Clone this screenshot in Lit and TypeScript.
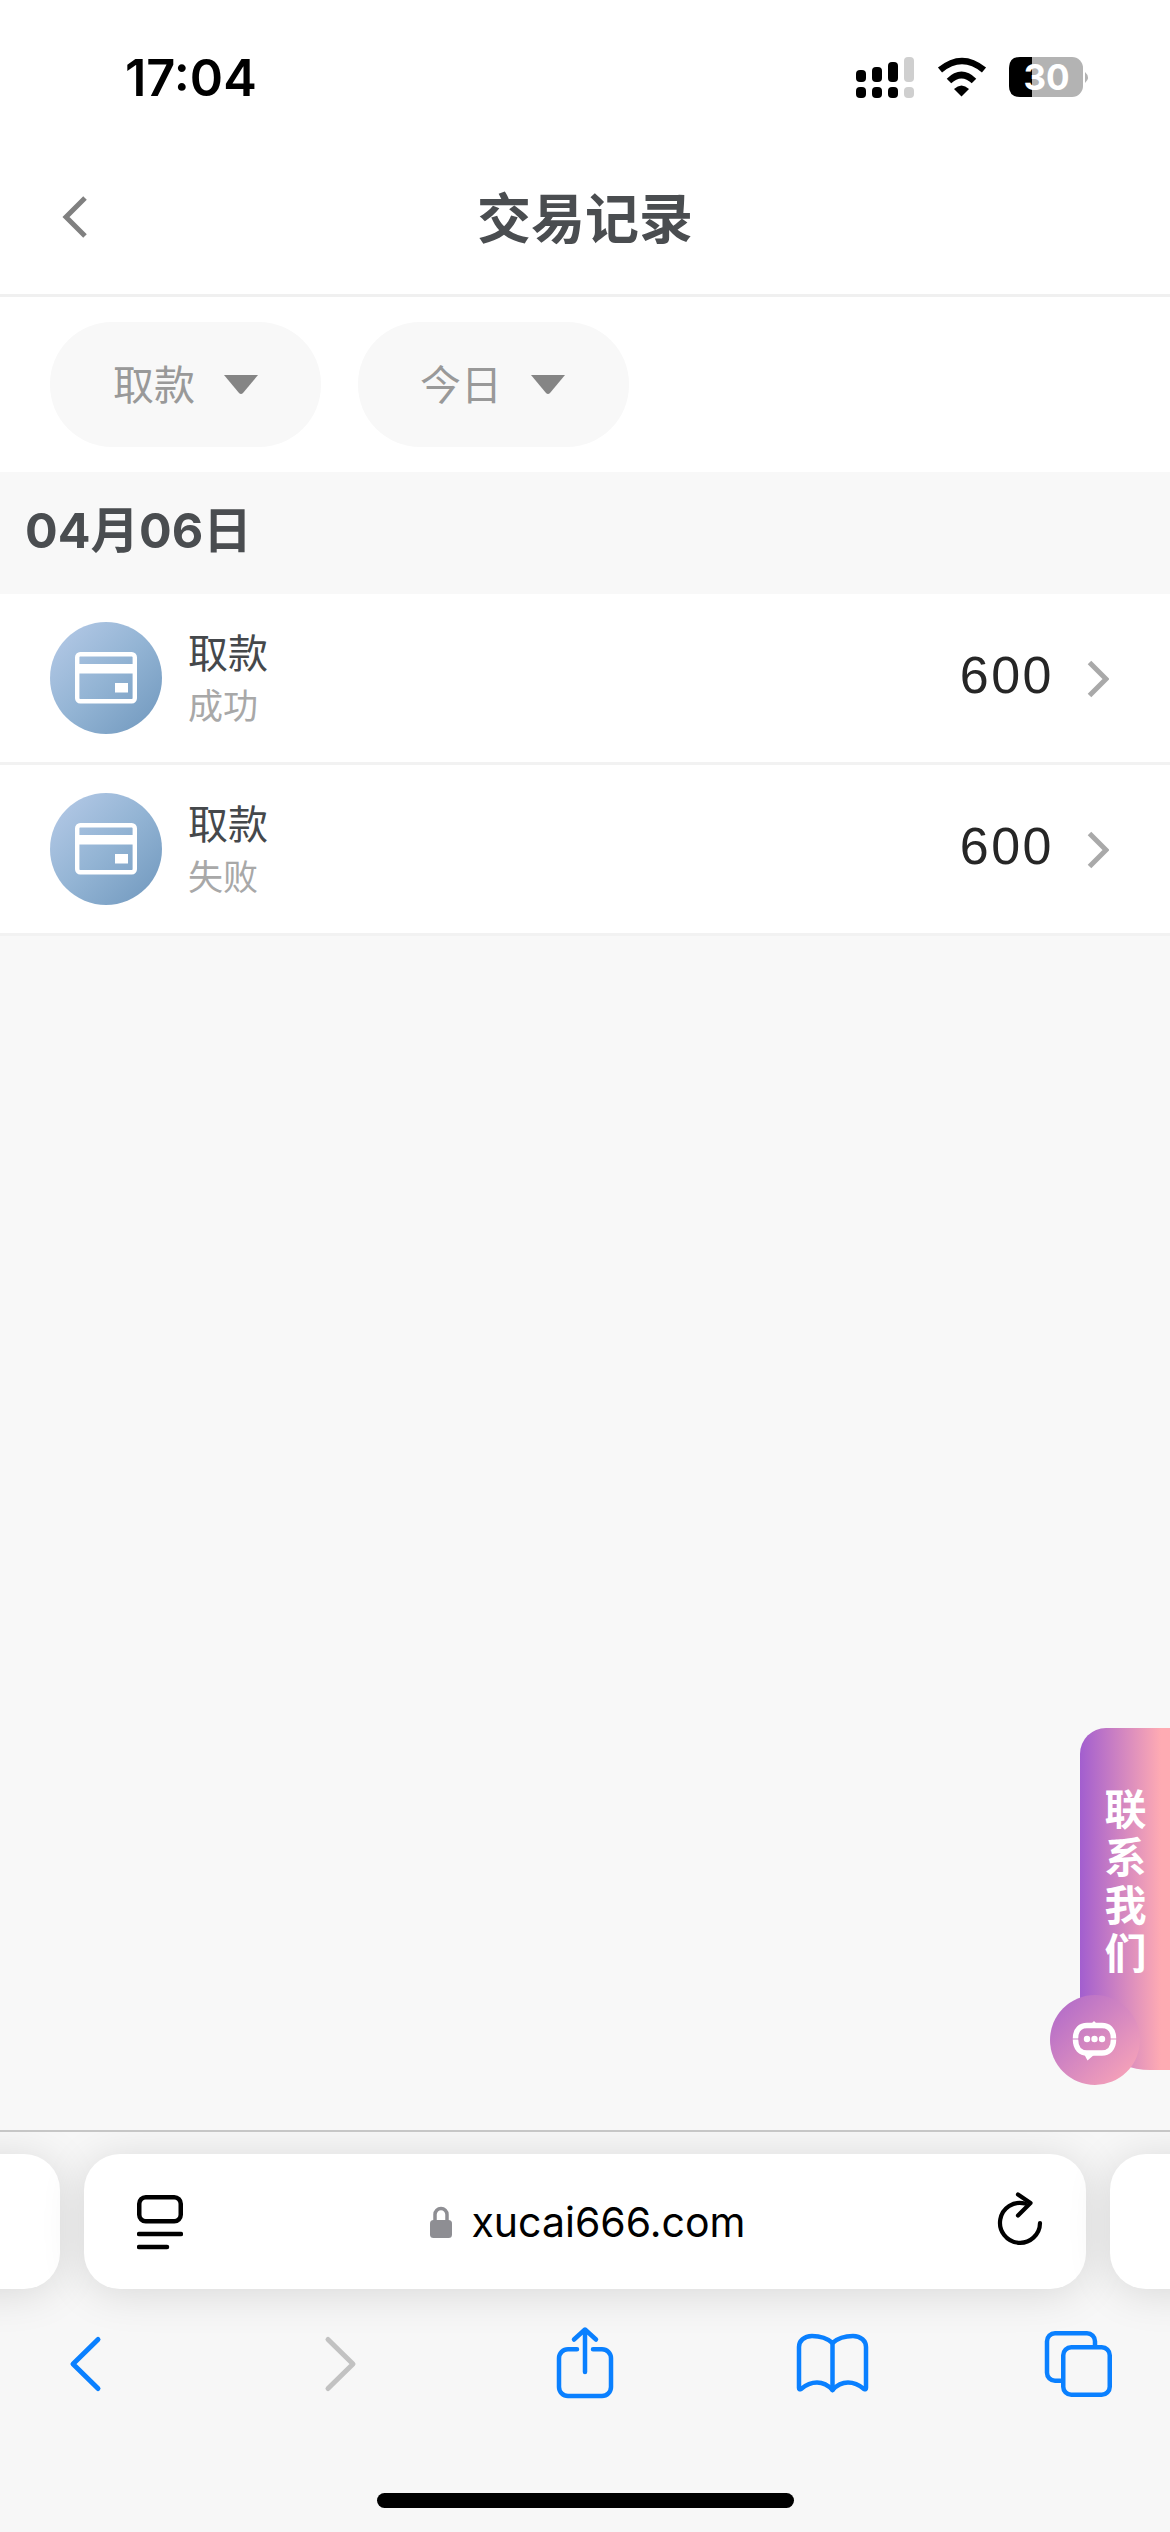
import { LitElement, html, css } from "lit";
import { customElement } from "lit/decorators.js";

const cardIcon = html`<svg class="card" viewBox="0 0 62 52" width="62" height="52">
  <rect x="2.2" y="2.2" width="57.6" height="47" rx="3" fill="none" stroke="#fff" stroke-width="4.4"/>
  <rect x="2" y="12" width="58" height="9.500" fill="#fff"/>
  <rect x="40" y="31" width="13" height="9.500" fill="#fff"/>
</svg>`;

@customElement("tx-row")
class TxRow extends LitElement {
  static properties = { status: {} };
  status = "";
  static styles = css`
    :host { display: flex; align-items: center; height: 168px; background: #fff; padding-left: 50px; border-bottom: 3px solid #f2f2f2; font-family: "Noto Sans CJK SC", "Liberation Sans", sans-serif; }
    .avatar { width: 112px; height: 112px; border-radius: 50%; background: linear-gradient(135deg, #b7cbe8 0%, #93b4d4 50%, #6f97bd 100%); display: flex; align-items: center; justify-content: center; flex: none; }
    .text { margin: -6px 0 0 26px; flex: 1; display: flex; flex-direction: column; }
    .name { font-size: 40px; line-height: 50px; color: #45484b; }
    .status { font-size: 35px; line-height: 42px; color: #a8a8a8; margin-top: 7px; }
    .amount { font: 52px/60px "Liberation Sans", sans-serif; color: #262626; letter-spacing: 2.500px; margin-top: -6px; }
    .chev { margin: 2px 61px 0 33px; flex: none; }
  `;
  render() {
    return html`<div class="avatar">${cardIcon}</div>
      <div class="text"><span class="name">取款</span><span class="status">${this.status}</span></div>
      <span class="amount">600</span>
      <svg class="chev" width="22" height="38" viewBox="0 0 22 38"><path d="M2.500 2.500 L19 19 L2.500 35.500" fill="none" stroke="#a9a9a9" stroke-width="5"/></svg>`;
  }
}

@customElement("app-root")
class AppRoot extends LitElement {
  static styles = css`
    :host { display: flex; flex-direction: column; position: relative; width: 1170px; height: 2532px; overflow: hidden; background: #f8f8f8; font-family: "Noto Sans CJK SC", "Liberation Sans", sans-serif; }
    .status { height: 150px; background: #fff; display: flex; align-items: center; justify-content: space-between; padding: 6px 74px 0 125px; box-sizing: border-box; flex: none; }
    .time { font: 600 50.500px/60px Inter, "Liberation Sans", sans-serif; color: #000; }
    .sys { display: block; overflow: visible; }
    .nav { height: 147px; box-sizing: border-box; background: #fff; border-bottom: 3px solid #f0f0f0; display: flex; align-items: center; justify-content: center; position: relative; flex: none; padding-bottom: 12px; }
    .nav h1 { margin: 0; font-size: 54px; line-height: 64px; font-weight: 700; color: #4a4d50; }
    .back { position: absolute; left: 60px; top: 45px; }
    .filters { height: 175px; box-sizing: border-box; background: #fff; display: flex; gap: 37px; padding: 25px 50px; flex: none; }
    .pill { width: 271px; height: 125px; border-radius: 62px; background: #f8f8f8; display: flex; align-items: center; padding-left: 63px; box-sizing: border-box; color: #999; font-size: 41px; gap: 29px; }
    .pill span { margin-bottom: 6px; }
    .pill.second { padding-left: 62px; }
    .date { height: 122px; display: flex; align-items: center; padding: 0 0 5px 25px; box-sizing: border-box; font: 700 48.500px/60px Inter, "Noto Sans CJK SC", sans-serif; color: #4a4d50; flex: none; }
    .fill { flex: 1; }
    .browser { height: 402px; flex: none; background: #f7f7f7; border-top: 2px solid #c6c6c6; box-sizing: border-box; position: relative; overflow: hidden; display: flex; flex-direction: column; }
    .tabs { display: flex; height: 135px; margin: 22px 0 0 -300px; gap: 24px; flex: none; }
    .side, .url { background: #fff; border-radius: 36px; box-shadow: 0 4px 44px rgba(0,0,0,.13); height: 135px; flex: none; }
    .side { width: 360px; }
    .url { width: 1002px; display: flex; align-items: center; justify-content: space-between; padding: 0 43px 0 53px; box-sizing: border-box; }
    .reader { margin-top: 3px; }
    .reload { margin-bottom: 3px; }
    .addr { display: flex; align-items: center; gap: 19px; font: 41px/50px Inter, "Liberation Sans", sans-serif; color: #000; margin-left: -4px; }
    .tools { position: relative; flex: 1; display: flex; align-items: flex-start; padding: 48px 0 0 70px; }
    .tools svg { flex: none; overflow: visible; }
    .forward { margin-left: 226px; }
    .share { margin: -10px 0 0 201px; }
    .book { margin: -3px 0 0 184px; }
    .pages { margin: -6px 0 0 177px; }
    .home { position: absolute; left: 377px; top: 361px; width: 417px; height: 15px; border-radius: 8px; background: #000; }
    .contact { position: absolute; left: 1080px; top: 1728px; width: 90px; height: 342px; border-radius: 26px 0 0 70px; background: linear-gradient(90deg, #a25ecf 0%, #ffabb3 90%); color: #fff; font-size: 42px; font-weight: 700; line-height: 42px; letter-spacing: 6px; writing-mode: vertical-rl; text-orientation: upright; display: flex; align-items: center; justify-content: flex-start; padding-top: 60px; box-sizing: border-box; }
    .bubble { position: absolute; left: 1050px; top: 1995px; width: 90px; height: 90px; border-radius: 50%; background: linear-gradient(135deg, #ab66cb 0%, #ffa9b6 100%); display: flex; align-items: center; justify-content: center; }
    .bubble svg { margin-top: 6px; overflow: visible; }
  `;
  render() {
    return html`
      <div class="status">
        <span class="time">17:04</span>
        <svg class="sys" width="240" height="42" viewBox="0 0 240 42">
          <g fill="#000">
            <rect x="0" y="13" width="10" height="12" rx="4"/><rect x="0" y="30" width="10" height="11" rx="4"/>
            <rect x="16" y="10" width="10" height="15" rx="4"/><rect x="16" y="30" width="10" height="11" rx="4"/>
            <rect x="32" y="5" width="10" height="20" rx="4"/><rect x="32" y="30" width="10" height="11" rx="4"/>
          </g>
          <rect x="48" y="0" width="10" height="25" rx="4" fill="#cfcfcf"/><rect x="48" y="30" width="10" height="11" rx="4" fill="#cfcfcf"/>
          <g fill="none" stroke="#000" stroke-width="6.500">
            <path d="M84 13 Q106 -5 128 13"/><path d="M93 24 Q105.500 12 118 24"/>
          </g>
          <path d="M98 32 Q105.500 25 113 32 L105.500 39.500 Z" fill="#000"/>
          <rect x="153" y="0" width="74" height="40" rx="11" fill="#b3b3b3"/>
          <path d="M164 0 H176 V40 H164 Q153 40 153 29 V11 Q153 0 164 0 Z" fill="#000"/>
          <path d="M229 15 Q235 20.500 229 26 Z" fill="#b3b3b3"/>
          <text x="190.500" y="32.500" text-anchor="middle" font-family="Inter, 'Liberation Sans', sans-serif" font-size="35" font-weight="700" fill="#fff">30</text>
        </svg>
      </div>
      <div class="nav">
        <svg class="back" width="30" height="44" viewBox="0 0 30 44"><path d="M25 3 L6 22 L25 41" fill="none" stroke="#808080" stroke-width="5"/></svg>
        <h1>交易记录</h1>
      </div>
      <div class="filters">
        <div class="pill"><span>取款</span>${this.caret()}</div>
        <div class="pill second"><span>今日</span>${this.caret()}</div>
      </div>
      <div class="date">04月06日</div>
      <tx-row status="成功"></tx-row>
      <tx-row status="失败"></tx-row>
      <div class="fill"></div>
      <div class="browser">
        <div class="tabs">
          <div class="side"></div>
          <div class="url">
            <svg class="reader" width="46" height="56" viewBox="0 0 46 56" fill="none" stroke="#000" stroke-width="4.500" stroke-linecap="round">
              <rect x="2.250" y="2.250" width="41.500" height="24" rx="6.500"/>
              <path d="M2 39 H44"/><path d="M2 52 H30"/>
            </svg>
            <div class="addr">
              <svg width="22" height="32" viewBox="0 0 22 32"><path d="M5 15 V8.500 a6 6 0 0 1 12 0 V15" fill="none" stroke="#8e8e93" stroke-width="3.500"/><rect x="0" y="14" width="22" height="18" rx="3.500" fill="#8e8e93"/></svg>
              <span>xucai666.com</span>
            </div>
            <svg class="reload" width="46" height="56" viewBox="0 0 46 56" fill="none" stroke="#000" stroke-width="4.200" stroke-linecap="round" stroke-linejoin="round">
              <path d="M28 11.500 A20 20 0 1 0 43 31"/><path d="M21 2.500 L33.500 11 L21 23.500"/>
            </svg>
          </div>
          <div class="side"></div>
        </div>
        <div class="tools">
          <svg width="30" height="54" viewBox="0 0 30 54"><path d="M28 2.500 L3 27 L28 51.500" fill="none" stroke="#0a80ff" stroke-width="5" stroke-linecap="round" stroke-linejoin="round"/></svg>
          <svg class="forward" width="30" height="54" viewBox="0 0 30 54"><path d="M2 2.500 L27 27 L2 51.500" fill="none" stroke="#c2c2c2" stroke-width="5" stroke-linecap="round" stroke-linejoin="round"/></svg>
          <svg class="share" width="56" height="72" viewBox="0 0 56 72" fill="none" stroke="#0a80ff" stroke-width="4.500" stroke-linecap="round" stroke-linejoin="round">
            <path d="M20 22.250 H11 a9 9 0 0 0 -9 9 V60 a9 9 0 0 0 9 9 H45 a9 9 0 0 0 9 -9 V31.250 a9 9 0 0 0 -9 -9 H36"/>
            <path d="M28 45 V3 M17 12.500 L28 2.500 L39 12.500"/>
          </svg>
          <svg class="book" width="71" height="58" viewBox="0 0 71 58" fill="none" stroke="#0a80ff" stroke-width="4.500" stroke-linecap="round" stroke-linejoin="round">
            <path d="M35.500 9 C30 4 23 2 15 2 C7 2 2 7 2 13 V54 Q2 56 4 55 C10 50 15 48.500 20 48.500 C26 48.500 31 51 35.500 56 C40 51 45 48.500 51 48.500 C56 48.500 61 50 67 55 Q69 56 69 54 V13 C69 7 64 2 56 2 C48 2 41 4 35.500 9 Z"/>
            <path d="M35.500 9 V56"/>
          </svg>
          <svg class="pages" width="68" height="66" viewBox="0 0 68 66" fill="none" stroke="#0a80ff" stroke-width="4.500">
            <path d="M18 49.750 H10 a8 8 0 0 1 -8 -8 V10.250 a8 8 0 0 1 8 -8 H42 a8 8 0 0 1 8 8 V16"/>
            <rect x="18.250" y="16.250" width="46.500" height="47.500" rx="8"/>
          </svg>
        </div>
        <div class="home"></div>
      </div>
      <div class="contact">联系我们</div>
      <div class="bubble">
        <svg width="46" height="40" viewBox="0 0 46 40" fill="none">
          <g stroke="#fff" stroke-width="5.500">
            <path d="M3.500 15.500 C3.500 6 9 2.500 15 2.500 H30 C36 2.500 41.500 6 41.500 15.500"/>
            <path d="M3.500 16.500 C3.500 26 9 30 15 30 H30 C36 30 41.500 26 41.500 16.500"/>
          </g>
          <path d="M19 1 L22 -2 L25 1 Z M12 31 H23 L15.500 37.500 Z" fill="#fff"/>
          <circle cx="15" cy="16" r="3.200" fill="#fff"/><circle cx="22.500" cy="16" r="3.200" fill="#fff"/><circle cx="30" cy="16" r="3.200" fill="#fff"/>
        </svg>
      </div>
    `;
  }
  caret() {
    return html`<svg width="34" height="20" viewBox="0 0 34 20"><path d="M0 0 H34 L19 18 Q17 20 15 18 Z" fill="#858585"/></svg>`;
  }
}
